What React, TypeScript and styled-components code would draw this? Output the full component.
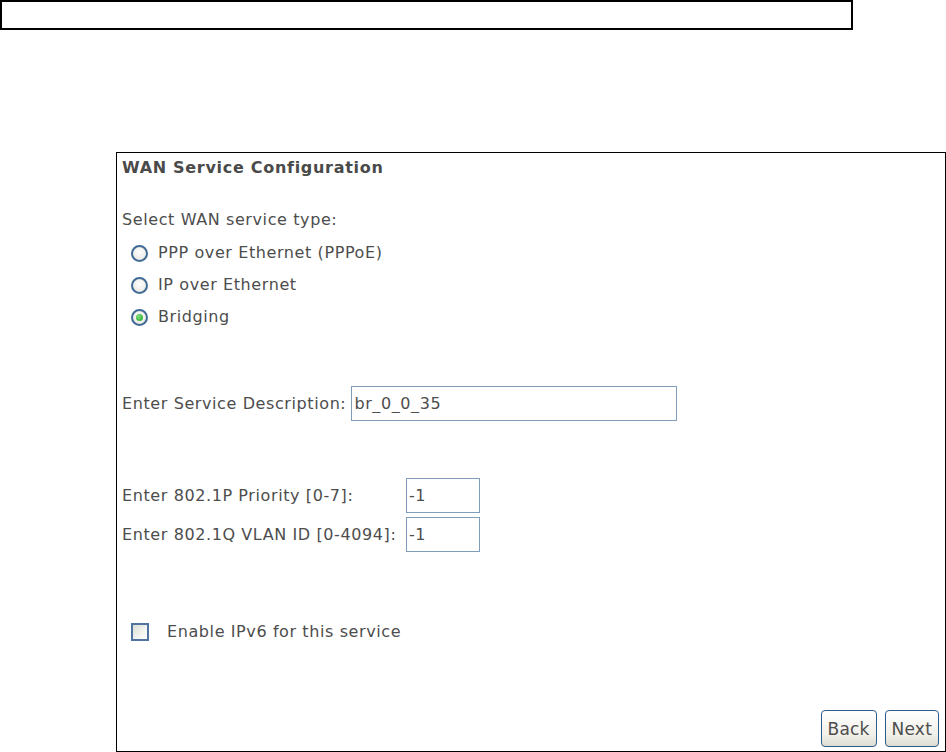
import { FC, useState } from 'react';
import styled, { createGlobalStyle } from 'styled-components';

const GlobalStyle = createGlobalStyle`
  body {
    margin: 0;
    background: #ffffff;
    font-family: 'DejaVu Sans', Verdana, sans-serif;
  }
`;

const Page = styled.div`
  width: 946px;
  height: 752px;
  overflow: hidden;
  display: flex;
  flex-direction: column;
`;

const CaptionBox = styled.div`
  width: 853px;
  height: 30px;
  box-sizing: border-box;
  border: 2px solid #000;
`;

const Panel = styled.div`
  margin: 122px 0 0 116px;
  width: 830px;
  height: 600px;
  box-sizing: border-box;
  border: 1.5px solid #000;
  padding: 5px 6px 4px 5px;
  display: flex;
  flex-direction: column;
  color: #4d4d4d;
  font-size: 16px;
  letter-spacing: 0.6px;
`;

const Title = styled.div`
  font-weight: bold;
  font-size: 16px;
  letter-spacing: 0.7px;
  line-height: 20px;
  color: #4a4a4a;
`;

const Prompt = styled.div`
  margin-top: 32px;
  line-height: 20px;
`;

const OptionList = styled.div`
  display: flex;
  flex-direction: column;
  gap: 12px;
  margin-top: 13px;
  padding-left: 9px;
`;

const Option = styled.label`
  display: flex;
  align-items: center;
  gap: 10px;
  line-height: 20px;
`;

const Radio = styled.span<{ $checked?: boolean }>`
  width: 17px;
  height: 17px;
  box-sizing: border-box;
  border-radius: 50%;
  border: 2px solid #3f6a95;
  background: radial-gradient(circle at 50% 40%, #ffffff 0%, #ecebe6 70%, #d9d8d2 100%);
  display: flex;
  align-items: center;
  justify-content: center;

  &::after {
    content: '';
    display: ${({ $checked }) => ($checked ? 'block' : 'none')};
    width: 7px;
    height: 7px;
    border-radius: 50%;
    background: radial-gradient(circle at 40% 35%, #7fe07f, #1ea41e);
  }
`;

const FieldRow = styled.div<{ $top: number }>`
  display: flex;
  align-items: center;
  margin-top: ${({ $top }) => $top}px;
`;

const FieldLabel = styled.span<{ $width?: number }>`
  ${({ $width }) => ($width ? `width: ${$width}px;` : '')}
  margin-right: 5px;
  white-space: nowrap;
`;

const TextBox = styled.input<{ $width: number }>`
  width: ${({ $width }) => $width}px;
  height: 35px;
  box-sizing: border-box;
  border: 1px solid #7f9db9;
  padding: 0 2px;
  font-family: 'DejaVu Sans', Verdana, sans-serif;
  font-size: 16px;
  letter-spacing: 0.6px;
  color: #4d4d4d;
  outline: none;
`;

const CheckRow = styled.label`
  display: flex;
  align-items: center;
  margin-top: 70px;
  padding-left: 9px;
  gap: 18px;
  line-height: 20px;
`;

const CheckBox = styled.span`
  width: 18px;
  height: 18px;
  box-sizing: border-box;
  border: 2px solid #4f74a0;
  background: linear-gradient(135deg, #dcdcd6 0%, #f4f4f0 60%, #ffffff 100%);
`;

const ButtonBar = styled.div`
  margin-top: auto;
  display: flex;
  justify-content: flex-end;
  gap: 8px;
`;

const NavButton = styled.button`
  height: 37px;
  padding: 0 6px;
  border: 1.5px solid #2f5b8a;
  border-radius: 4px;
  background: linear-gradient(#ffffff, #f0efe8 70%, #dedcd2);
  color: #4d4d4d;
  font-family: 'DejaVu Sans', Verdana, sans-serif;
  font-size: 17px;
  letter-spacing: 0.2px;
  cursor: pointer;
`;

const options = ['PPP over Ethernet (PPPoE)', 'IP over Ethernet', 'Bridging'];

const App: FC = () => {
  const [selected, setSelected] = useState(2);

  return (
    <>
      <GlobalStyle />
      <Page>
        <CaptionBox />
        <Panel>
          <Title>WAN Service Configuration</Title>
          <Prompt>Select WAN service type:</Prompt>
          <OptionList>
            {options.map((name, index) => (
              <Option key={name} onClick={() => setSelected(index)}>
                <Radio $checked={selected === index} />
                {name}
              </Option>
            ))}
          </OptionList>
          <FieldRow $top={59}>
            <FieldLabel>Enter Service Description:</FieldLabel>
            <TextBox $width={326} defaultValue="br_0_0_35" />
          </FieldRow>
          <FieldRow $top={57}>
            <FieldLabel $width={279}>Enter 802.1P Priority [0-7]:</FieldLabel>
            <TextBox $width={74} defaultValue="-1" />
          </FieldRow>
          <FieldRow $top={4}>
            <FieldLabel $width={279}>Enter 802.1Q VLAN ID [0-4094]:</FieldLabel>
            <TextBox $width={74} defaultValue="-1" />
          </FieldRow>
          <CheckRow>
            <CheckBox />
            Enable IPv6 for this service
          </CheckRow>
          <ButtonBar>
            <NavButton>Back</NavButton>
            <NavButton>Next</NavButton>
          </ButtonBar>
        </Panel>
      </Page>
    </>
  );
};

export default App;
